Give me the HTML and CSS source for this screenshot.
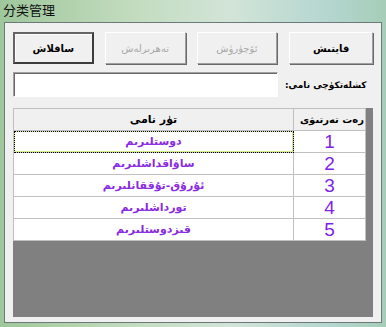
FILE: index.html
```html
<!DOCTYPE html>
<html lang="ug">
<head>
    <meta charset="UTF-8">
    <title>分类管理</title>
    <link rel="stylesheet" href="styles.css">
</head>
<body>
    <div class="window">
        <div class="title-bar">分类管理</div>
        <div class="client">
            <div class="button-row">
                <button class="btn btn-default">ساقلاش</button>
                <button class="btn" disabled>تەھرىرلەش</button>
                <button class="btn" disabled>ئۆچۈرۈش</button>
                <button class="btn btn-wide">قايتىش</button>
            </div>
            <div class="name-row">
                <input class="name-input" type="text">
                <label class="name-label" dir="rtl">كشلەتكۈچى نامى:</label>
            </div>
            <div class="grid-box">
                <table class="grid">
                    <tr>
                        <th class="col-name" dir="rtl">تۈر نامى</th>
                        <th class="col-num" dir="rtl">رەت تەرتىۋى</th>
                    </tr>
                    <tr>
                        <td class="col-name focused" dir="rtl">دوستلىرىم</td>
                        <td class="col-num">1</td>
                    </tr>
                    <tr>
                        <td class="col-name" dir="rtl">ساۋاقداشلىرىم</td>
                        <td class="col-num">2</td>
                    </tr>
                    <tr>
                        <td class="col-name" dir="rtl">ئۇرۇق-تۇققانلىرىم</td>
                        <td class="col-num">3</td>
                    </tr>
                    <tr>
                        <td class="col-name" dir="rtl">تورداشلىرىم</td>
                        <td class="col-num">4</td>
                    </tr>
                    <tr>
                        <td class="col-name" dir="rtl">قىزدوستلىرىم</td>
                        <td class="col-num">5</td>
                    </tr>
                </table>
            </div>
        </div>
    </div>
</body>
</html>
```

FILE: styles.css
```css
body {
    margin: 0;
    font-family: "DejaVu Sans", "Noto Sans CJK SC", sans-serif;
}

.window {
    width: 386px;
    height: 327px;
    box-sizing: border-box;
    padding: 0 4px 4px 4px;
    background: linear-gradient(to right, #9fc79c 0%, #c3dcbf 35%, #d2e4d8 60%, #b4d6cf 85%, #a6cdb8 100%);
    display: flex;
    flex-direction: column;
}

.title-bar {
    height: 22px;
    line-height: 20px;
    margin-left: -1px;
    font-family: "Noto Sans CJK SC", sans-serif;
    font-size: 13px;
    color: #111;
}

.client {
    flex: 1;
    background-color: #f0f0f0;
    border: 1px solid #6b7a78;
    padding: 9px 8px 5px 8px;
    display: flex;
    flex-direction: column;
}

.button-row {
    display: flex;
    gap: 11px;
}

.btn {
    width: 81px;
    height: 32px;
    box-sizing: border-box;
    background-color: #f0f0f0;
    border: 1px solid;
    border-color: #fff #a0a0a0 #a0a0a0 #fff;
    box-shadow: 1px 1px 0 #696969;
    font-family: "DejaVu Sans", sans-serif;
    font-size: 10px;
    font-weight: bold;
    color: #000;
    padding: 0;
}

.btn:disabled {
    color: #a9a9a9;
    font-weight: normal;
}

.btn-default {
    border: 2px solid #646464;
    border-right-color: #3c3c3c;
    border-bottom-color: #3c3c3c;
    box-shadow: inset 1px 1px 0 #fff;
}

.btn-wide {
    width: 84px;
    margin-left: 1px;
}

.name-row {
    display: flex;
    align-items: center;
    margin-top: 8px;
}

.name-input {
    width: 265px;
    height: 25px;
    box-sizing: border-box;
    border: 1px solid;
    border-color: #a0a0a0 #fff #fff #a0a0a0;
    box-shadow: inset 1px 1px 0 #696969;
    background-color: #fff;
    margin: 0;
}

.name-label {
    margin-left: 7px;
    font-size: 9px;
    font-weight: bold;
    color: #000;
    white-space: nowrap;
}

.grid-box {
    margin-top: 11px;
    width: 360px;
    flex: 1;
    background-color: #808080;
}

.grid {
    width: 353px;
    border-collapse: collapse;
    background-color: #fff;
    border-right: 1px solid #000;
    border-bottom: 1px solid #000;
    table-layout: fixed;
}

.grid th,
.grid td {
    height: 21px;
    padding: 0;
    border: 1px solid #c0c0c0;
    text-align: center;
    white-space: nowrap;
    overflow: hidden;
}

.grid th {
    background-color: #f0f0f0;
    font-size: 11px;
    font-weight: bold;
    color: #000;
}

.grid th.col-num {
    font-size: 10px;
    text-align: right;
    padding-right: 1px;
}

.col-name {
    width: 279px;
}

.grid td.col-name {
    font-size: 11px;
    font-weight: bold;
    color: #8a2be2;
}

.grid td.col-num {
    font-family: "Liberation Sans", sans-serif;
    font-size: 19px;
    line-height: 20px;
    color: #7f1fe8;
}

.grid td.focused {
    outline: 1px dotted #000;
    outline-offset: -1px;
    box-shadow: inset 0 0 0 1px #d4ec88;
}
```
